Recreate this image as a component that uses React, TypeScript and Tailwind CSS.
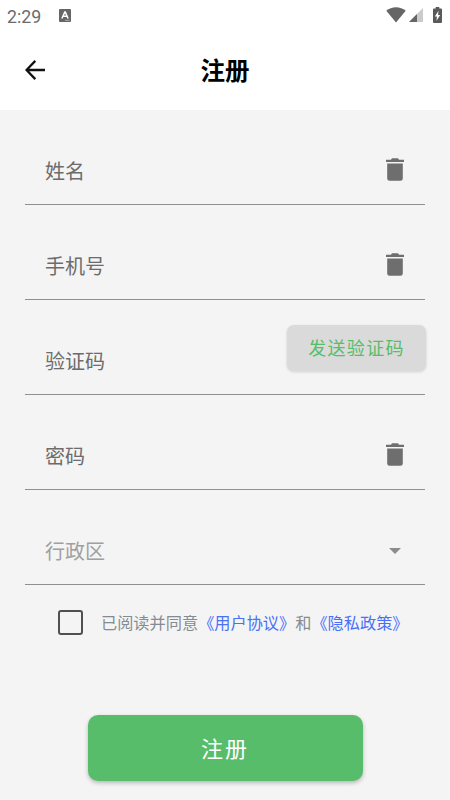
import { useState } from "react";

type FieldProps = {
  label: string;
  muted?: boolean;
  children?: React.ReactNode;
};

const TrashIcon = () => (
  <svg viewBox="0 0 18 23" className="w-[18px] h-[23px]" fill="#6e6e6e">
    <path d="M0 1.7h4.9L6.1.3h5.8l1.2 1.4H18v2.4H0zM1.2 5.4h15.6v15a2.4 2.4 0 0 1-2.4 2.4H3.6a2.4 2.4 0 0 1-2.4-2.4z" />
  </svg>
);

const Field = ({ label, muted, children }: FieldProps) => (
  <div className="h-[95px] pl-5 pt-[27px] flex items-center justify-between border-b border-[#909090]">
    <span
      className={
        muted
          ? "text-[20px] leading-none text-[#a0a0a0]"
          : "text-[20px] leading-none text-[#6c6c6c]"
      }
    >
      {label}
    </span>
    {children}
  </div>
);

const ClearButton = () => (
  <button type="button" className="mr-[21px] -mt-0.5">
    <TrashIcon />
  </button>
);

const StatusBar = () => (
  <div className="h-[30px] pl-[7px] pr-[8px] flex items-center">
    <span className="w-[35px] pt-[3px] font-[Roboto] text-[17.8px] leading-none text-[#6b6b6b]">
      2:29
    </span>
    <svg viewBox="0 0 12 13" className="ml-[17px] w-3 h-[13px]">
      <rect width="12" height="13" rx="1" fill="#666666" />
      <path
        d="M2.9 9.5 5.8 3h.5l2.8 6.5M4.2 7.3h3.6"
        fill="none"
        stroke="#ffffff"
        strokeWidth="1.5"
      />
      <path d="M6 11.3h4.5" stroke="#bbbbbb" strokeWidth="0.8" />
    </svg>
    <div className="ml-auto flex items-center">
      <svg viewBox="0 0 20 16" className="w-5 h-4" fill="#666666">
        <path d="M10 15.5.3 3.8C3 1.5 6.3.3 10 .3s7 1.2 9.7 3.5z" />
      </svg>
      <svg viewBox="0 0 14 14" className="ml-[3px] w-3.5 h-3.5">
        <path d="M14 0v14H0z" fill="#cbcbcb" />
        <path d="M8 6v8H0z" fill="#666666" />
      </svg>
      <svg viewBox="0 0 9 16" className="ml-[10px] w-[9px] h-4">
        <path
          d="M2.7 0h3.6v1.6H8a1 1 0 0 1 1 1V15a1 1 0 0 1-1 1H1a1 1 0 0 1-1-1V2.6a1 1 0 0 1 1-1h1.7z"
          fill="#5a5a5a"
        />
        <path d="M5.5 3.8 1.8 9.5h2.1L3.5 13.8 7.2 8.1H5.1z" fill="#ffffff" />
      </svg>
    </div>
  </div>
);

const App = () => {
  const [agreed, setAgreed] = useState<boolean>(false);

  return (
    <div className="w-[450px] h-[800px] overflow-hidden bg-[#f4f4f4] font-['Noto_Sans_CJK_SC',sans-serif]">
      {/* Header */}
      <header className="h-[110px] bg-white">
        <StatusBar />
        <div className="h-20 px-[25px] grid grid-cols-[20px_1fr_20px] items-center">
          <button type="button">
            <svg
              viewBox="0 0 20 20"
              className="w-5 h-5"
              fill="none"
              stroke="#111111"
              strokeWidth="2.3"
            >
              <path d="M20 10H2M10.3 .9 1.5 10l8.8 9.1" />
            </svg>
          </button>
          <h1 className="text-center text-[24.5px] leading-none font-bold text-black">
            注册
          </h1>
        </div>
      </header>

      {/* Form */}
      <form className="px-[25px]">
        <Field label="姓名">
          <ClearButton />
        </Field>
        <Field label="手机号">
          <ClearButton />
        </Field>
        <Field label="验证码">
          <button
            type="button"
            className="-mr-px mb-[26px] w-[139px] h-[46px] shrink-0 rounded-[7px] bg-[#dadada] pb-0.5 text-[18px] leading-none tracking-[1.3px] text-[#58bd6b] shadow-[0_1px_3px_rgba(0,0,0,0.15)]"
          >
            发送验证码
          </button>
        </Field>
        <Field label="密码">
          <ClearButton />
        </Field>
        <Field label="行政区" muted>
          <svg viewBox="0 0 12 6" className="mr-6 w-3 h-1.5" fill="#8c8c8c">
            <path d="M0 0h12L6 6z" />
          </svg>
        </Field>

        {/* Agreement */}
        <div className="mt-[25px] pl-[33px] flex items-center whitespace-nowrap">
          <button
            type="button"
            role="checkbox"
            aria-checked={agreed}
            className="w-[25px] h-[25px] shrink-0 rounded-[3px] border-2 border-[#505050]"
            onClick={() => setAgreed(!agreed)}
          />
          <p className="ml-[18px] text-[16.2px] leading-none text-[#858b92]">
            已阅读并同意<span className="text-[#4a70f8]">《用户协议》</span>和
            <span className="text-[#4a70f8]">《隐私政策》</span>
          </p>
        </div>

        {/* Submit */}
        <button
          type="submit"
          className="mt-20 mx-auto block w-[275px] h-[66px] rounded-[10px] bg-[#58bd6b] pb-0.5 text-[22px] leading-none tracking-[2px] text-white shadow-[0_2px_4px_rgba(0,0,0,0.25)]"
        >
          注册
        </button>
      </form>
    </div>
  );
};
export default App;
